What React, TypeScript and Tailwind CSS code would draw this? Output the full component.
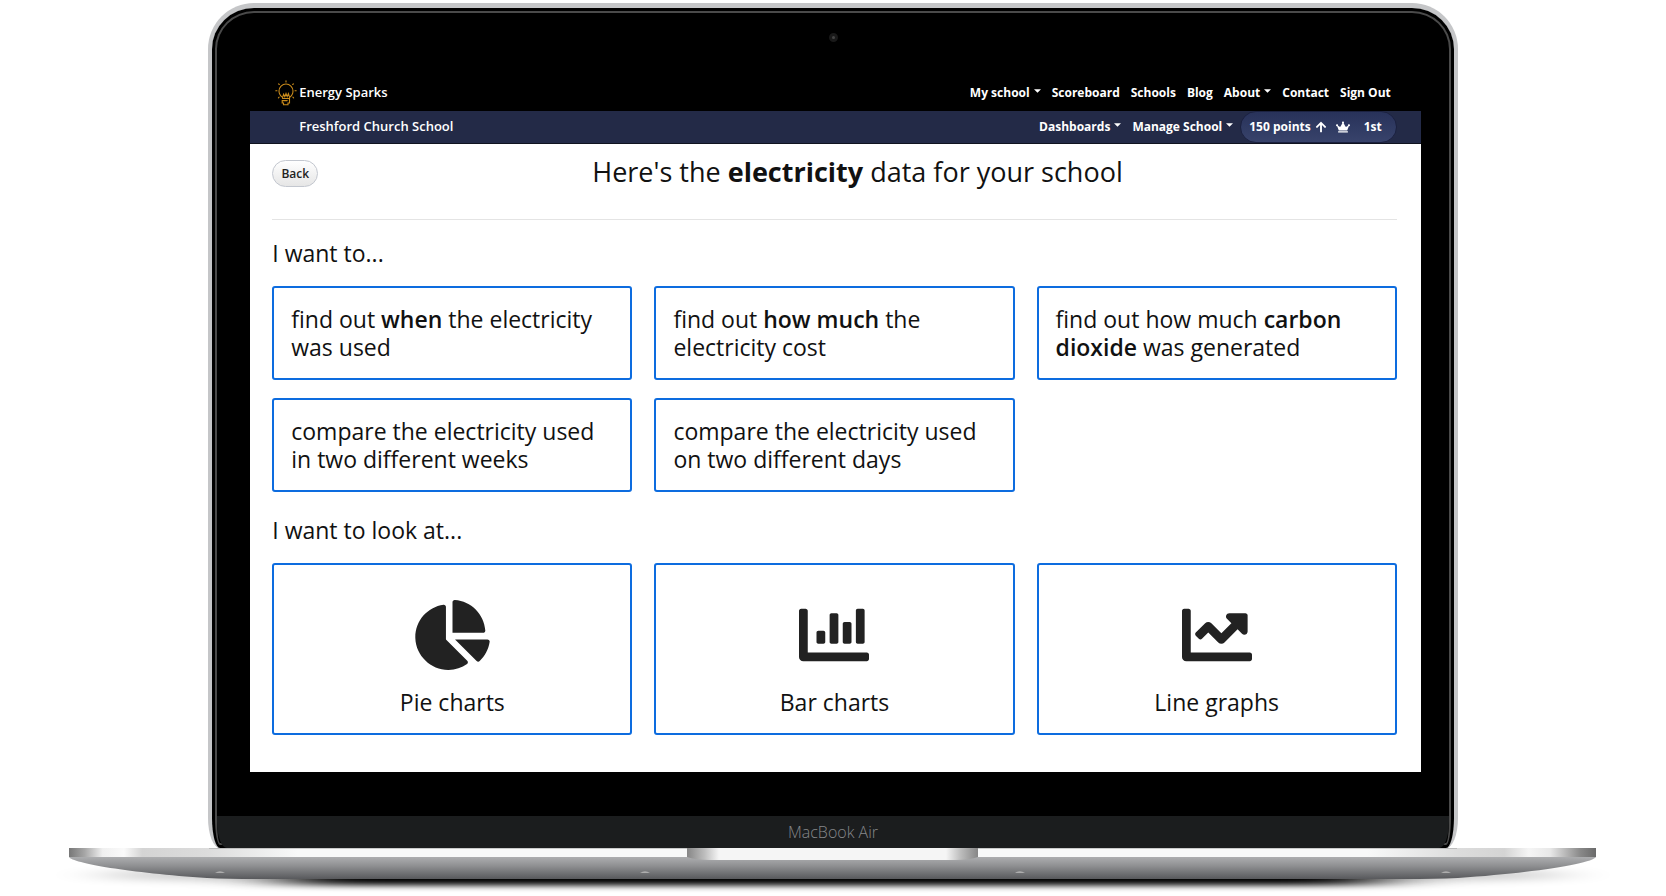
import type { ReactNode } from "react";
import { FaArrowUp, FaChartBar, FaChartLine, FaChartPie, FaCrown } from "react-icons/fa";

const cardClass =
  "rounded-[3px] border-2 border-[#0d6cdf] bg-white p-[17px] text-[23px] leading-7 text-[#111]";

function Caret() {
  return (
    <svg viewBox="0 0 8 4" className="mb-1 ml-1 h-[4px] w-[7px] fill-current" aria-hidden="true">
      <path d="M0 0h8L4 4z" />
    </svg>
  );
}

function NavLink({ children, caret = false }: { children: ReactNode; caret?: boolean }) {
  return (
    <a href="#" className="flex items-center whitespace-nowrap text-white">
      {children}
      {caret && <Caret />}
    </a>
  );
}

function Bulb() {
  return (
    <svg viewBox="0 0 22 26" className="h-[26px] w-[22px]" fill="none" stroke="#c98a1b" strokeWidth="1.1" strokeLinecap="round" aria-hidden="true">
      <path d="M7.6 17.4C5.200 15.800 4 13.700 4 11a7 7 0 0 1 14 0c0 2.700-1.200 4.800-3.400 6.400" />
      <path d="M7.600 17.400l1-3.200 1.200 2.400 1.200-3 1.200 3 1.200-3 1.200 3.800" />
      <path d="M7.500 18.500h7v4.500h-1.500v1.800h-4.500v-1.800h-1.300v-2.400h5" />
      <path d="M11 .8v1.200M3.600 3.800l.7.7M18.400 3.800l-.7.7M.8 10.800h1.200M20 10.800h1.200M3.400 17.800l.7-.7M18.600 17.800l-.7-.7" />
    </svg>
  );
}

function ChartCard({ icon, label }: { icon: ReactNode; label: string }) {
  return (
    <a href="#" className={`${cardClass} flex flex-col items-center gap-[18px] pt-[35px]`}>
      {icon}
      {label}
    </a>
  );
}

function LaptopBase() {
  return (
    <svg viewBox="0 0 1666 47" preserveAspectRatio="none" className="block h-[47px] w-full" aria-hidden="true">
      <defs>
        <linearGradient id="edge" x1="69" x2="1596" y1="0" y2="0" gradientUnits="userSpaceOnUse">
          <stop offset="0" stopColor="#777" />
          <stop offset="0.010" stopColor="#a5a5a5" />
          <stop offset="0.022" stopColor="#f0f0f0" />
          <stop offset="0.036" stopColor="#fafafa" />
          <stop offset="0.048" stopColor="#d4d4d4" />
          <stop offset="0.090" stopColor="#dcdcdc" />
          <stop offset="0.150" stopColor="#f8f9f9" />
          <stop offset="0.850" stopColor="#f8f9f9" />
          <stop offset="0.910" stopColor="#dcdcdc" />
          <stop offset="0.940" stopColor="#d4d4d4" />
          <stop offset="0.956" stopColor="#f5f5f5" />
          <stop offset="0.970" stopColor="#e8e8e8" />
          <stop offset="0.990" stopColor="#888" />
          <stop offset="1" stopColor="#6a6a6a" />
        </linearGradient>
        <linearGradient id="belly" x1="0" x2="0" y1="0" y2="1">
          <stop offset="0" stopColor="#adaeb0" />
          <stop offset="0.400" stopColor="#8f9092" />
          <stop offset="1" stopColor="#58595c" />
        </linearGradient>
        <linearGradient id="notch" x1="0" x2="1" y1="0" y2="0">
          <stop offset="0" stopColor="#868686" />
          <stop offset="0.060" stopColor="#bdbdbd" />
          <stop offset="0.110" stopColor="#f5f5f5" />
          <stop offset="0.890" stopColor="#f5f5f5" />
          <stop offset="0.940" stopColor="#bdbdbd" />
          <stop offset="1" stopColor="#868686" />
        </linearGradient>
        <filter id="soft" x="-20%" y="-100%" width="140%" height="300%">
          <feGaussianBlur stdDeviation="26 4" />
        </filter>
        <filter id="core" x="-20%" y="-100%" width="140%" height="300%">
          <feGaussianBlur stdDeviation="40 3" />
        </filter>
      </defs>
      <ellipse cx="833" cy="27" rx="740" ry="10" fill="#000" opacity="0.22" filter="url(#soft)" />
      <rect x="290" y="22" width="1086" height="15" fill="#000" filter="url(#core)" />
      <path d="M69 9C72 15 130 25 207 30Q230 31 260 31H1405Q1435 31 1458 30C1535 25 1593 15 1596 9Z" fill="url(#belly)" />
      <rect x="69" y="0" width="1527" height="9" fill="url(#edge)" />
      <path d="M209 .5H1457" stroke="#9c9c9c" strokeWidth="1" opacity="0.5" />
      <path d="M687 0H978V9Q970 12 955 12H710Q695 12 687 9Z" fill="url(#notch)" />
      {[220, 645, 1020, 1446].map((x) => (
        <path key={x} d={`M${x - 5} 25q5-3.500 10 0z`} fill="#adadad" />
      ))}
    </svg>
  );
}

export default function App() {
  return (
    <div className="flex flex-col items-center bg-white pt-[3px] font-['Open_Sans',sans-serif]">
      <div className="flex w-3/4 flex-col rounded-t-[46px] rounded-b-[12px_30px] border-4 border-t-5 border-b-0 border-[#c5c6c8] bg-black shadow-[inset_0_0_0_3px_#000,inset_0_0_0_5px_#4a4a4a]">
        <div className="flex h-[67px] justify-center pt-[25px]">
          <span className="size-[9px] rounded-full border-3 border-[#191919] bg-[#444]" />
        </div>

        <div className="mr-[33px] ml-[38px] flex flex-col">
          <nav className="flex h-9 items-center justify-between pr-[30px] pl-[25px] text-[12px] font-bold">
            <a href="#" className="flex items-center gap-[2px] text-[13px] font-semibold text-white">
              <Bulb />
              Energy Sparks
            </a>
            <div className="flex items-center gap-[11px]">
              <NavLink caret>My school</NavLink>
              <NavLink>Scoreboard</NavLink>
              <NavLink>Schools</NavLink>
              <NavLink>Blog</NavLink>
              <NavLink caret>About</NavLink>
              <NavLink>Contact</NavLink>
              <NavLink>Sign Out</NavLink>
            </div>
          </nav>

          <nav className="flex h-[33px] items-center justify-between border-b border-[#10131f] bg-[#232a47] pr-6 pl-[49px] text-[12px] font-bold">
            <a href="#" className="text-[13px] font-semibold text-white">Freshford Church School</a>
            <div className="flex h-full items-center gap-[11px]">
              <NavLink caret>Dashboards</NavLink>
              <NavLink caret>Manage School</NavLink>
              <a href="#" className="-ml-1 flex h-full items-center rounded-full border border-[#1b2140] bg-linear-to-b from-[#28325a] to-[#38436b] pr-[14px] pl-2 whitespace-nowrap text-white">
                150 points
                <FaArrowUp className="ml-1 text-[12px]" />
                <FaCrown className="ml-[9px] text-[14px]" />
                <span className="ml-[14px]">1st</span>
              </a>
            </div>
          </nav>

          <main className="flex flex-col bg-white pt-4 pr-6 pb-[37px] pl-[22px] text-[#111]">
            <div className="flex items-start border-b border-[#e4e4e4] pb-8">
              <button type="button" className="h-[27px] w-[46px] rounded-full border border-[#c3c7cf] bg-linear-to-b from-white to-[#e6e6e6] text-[12px] font-semibold text-[#222]">
                Back
              </button>
              <h1 className="flex-1 text-center text-[27px] leading-6">
                Here's the <b>electricity</b> data for your school
              </h1>
            </div>

            <h2 className="mt-[19px] text-[23px] leading-7">I want to...</h2>
            <div className="mt-[19px] grid grid-cols-3 gap-x-[22px] gap-y-[18px]">
              <a href="#" className={cardClass}>find out <b className="font-semibold">when</b> the electricity was used</a>
              <a href="#" className={cardClass}>find out <b className="font-semibold">how much</b> the electricity cost</a>
              <a href="#" className={cardClass}>find out how much <b className="font-semibold">carbon dioxide</b> was generated</a>
              <a href="#" className={cardClass}>compare the electricity used in two different weeks</a>
              <a href="#" className={cardClass}>compare the electricity used on two different days</a>
            </div>

            <h2 className="mt-6 text-[23px] leading-7">I want to look at...</h2>
            <div className="mt-[19px] grid grid-cols-3 gap-x-[22px]">
              <ChartCard icon={<FaChartPie className="h-[70px] w-[75px] text-[#222]" />} label="Pie charts" />
              <ChartCard icon={<FaChartBar className="size-[70px] text-[#222]" />} label="Bar charts" />
              <ChartCard icon={<FaChartLine className="size-[70px] text-[#222]" />} label="Line graphs" />
            </div>
          </main>
        </div>

        <div className="mx-[5px] mt-11 flex h-8 items-center justify-center rounded-b-[10px_26px] bg-[#1b1d1e] text-[16px] font-light text-[#85878a]">
          MacBook Air
        </div>
      </div>
      <LaptopBase />
    </div>
  );
}
